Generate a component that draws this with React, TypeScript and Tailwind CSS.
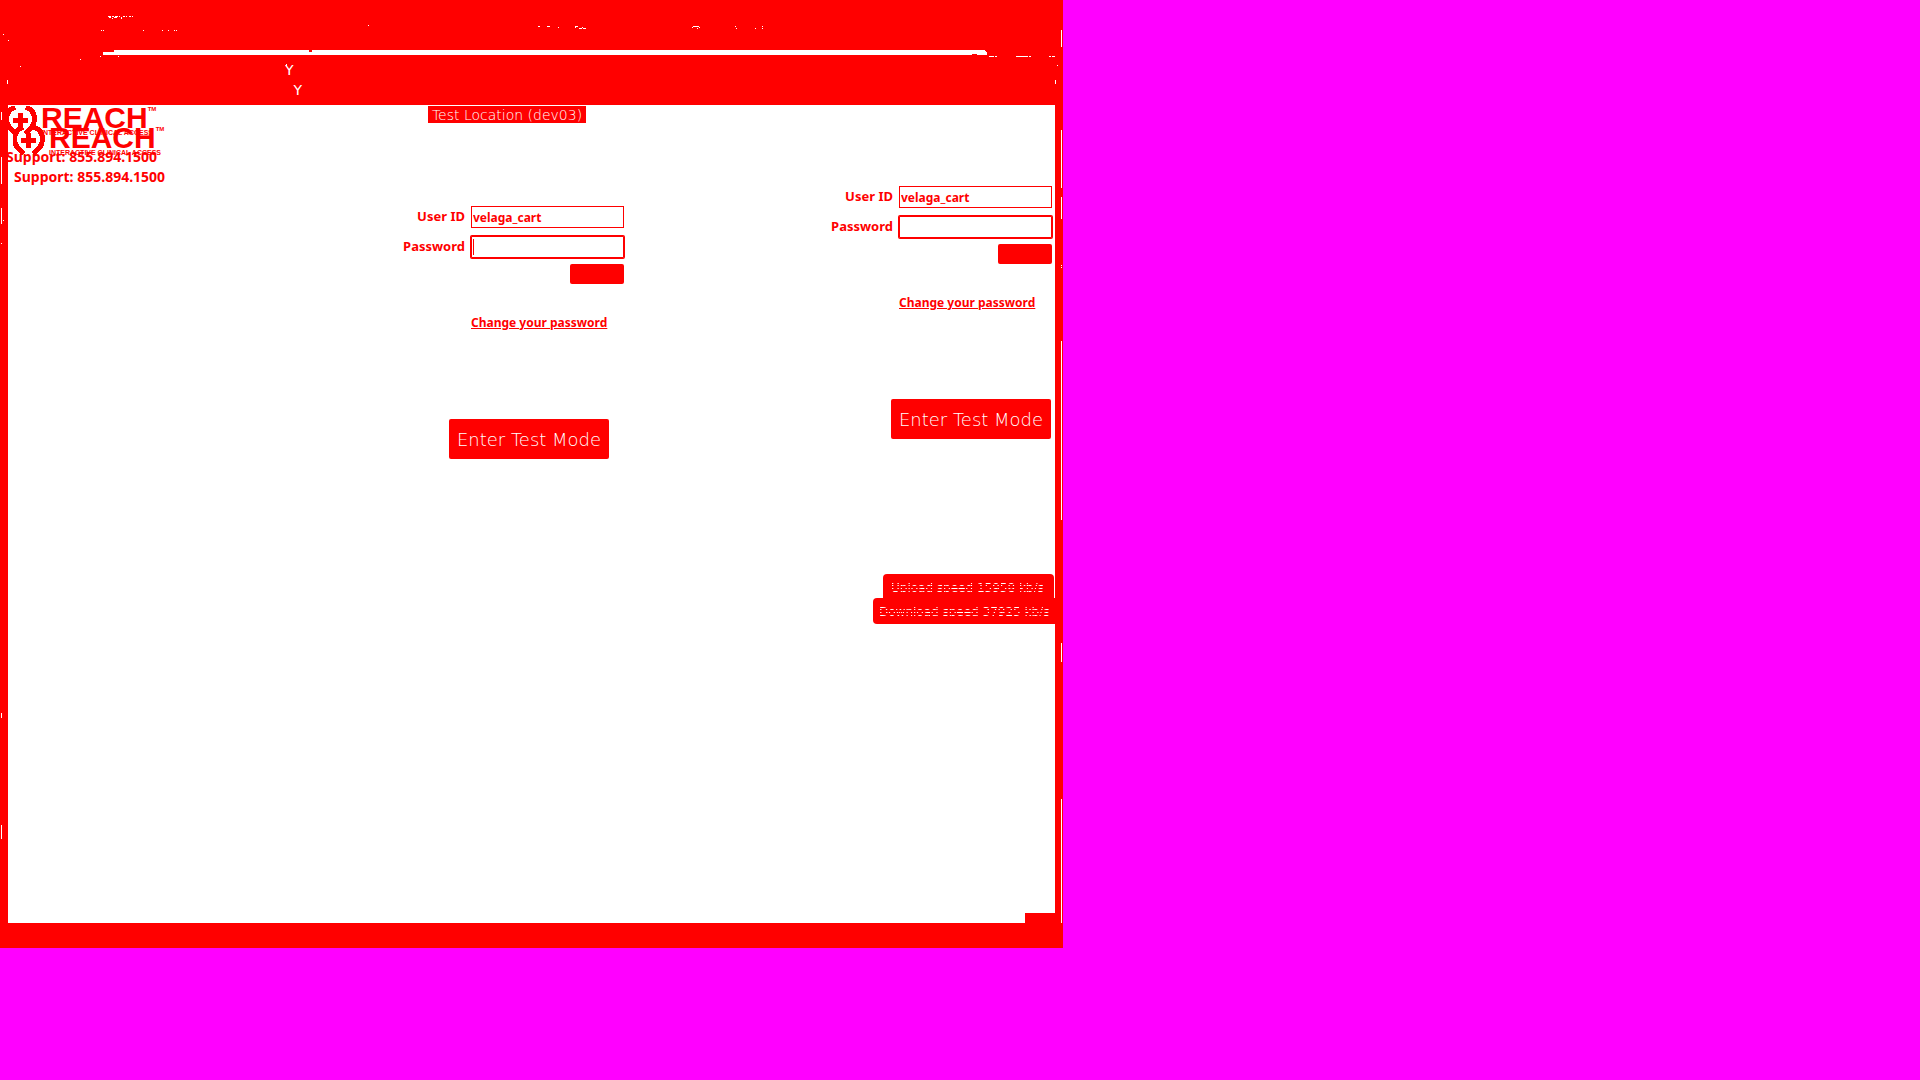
import React from "react";

const sans = "font-['DejaVu_Sans',sans-serif]";

function Emblem() {
  return (
    <svg width="32" height="30" viewBox="0 0 32 30" fill="none" stroke="#ff0000" aria-hidden="true" shapeRendering="crispEdges">
      <path d="M10 1 C0 5 0 15 4 21 L11 28" strokeWidth="5" />
      <path d="M21 1 C31 5 31 15 27 21 L20 28" strokeWidth="5" />
      <path d="M15.5 7v15M8 14.5h15" strokeWidth="5" />
    </svg>
  );
}

function Brand({ className = "" }: { className?: string }) {
  return (
    <div className={`flex h-[47px] w-[160px] flex-col ${className}`}>
      <div className="flex h-[30px] shrink-0">
        <Emblem />
        <div className="ml-1 font-['Liberation_Sans',sans-serif] font-bold">
          <div className="flex items-start">
            <span className="text-[30px] leading-[23px]">REACH</span>
            <span className="text-[6px] leading-[6px]">TM</span>
          </div>
          <div className="text-[7px] leading-[8px] whitespace-nowrap">INTERACTIVE CLINICAL ACCESS</div>
        </div>
      </div>
      <p className="mt-[13px] ml-px font-['Noto_Sans',sans-serif] text-[14px] leading-[16px] font-bold whitespace-nowrap">
        Support: 855.894.1500
      </p>
    </div>
  );
}

function LoginForm({ id, caret = false, modeClass }: { id: string; caret?: boolean; modeClass: string }) {
  return (
    <form className="flex w-[223px] flex-col font-['Noto_Sans',sans-serif] text-[13px] font-bold" onSubmit={(e) => e.preventDefault()}>
      <div className="flex h-[22px] items-center justify-end gap-1.5">
        <label htmlFor={`${id}-user`} className="whitespace-nowrap">User ID</label>
        <input
          id={`${id}-user`}
          defaultValue="velaga_cart"
          className="h-[22px] w-[153px] shrink-0 border border-[#ff0000] bg-white px-px text-[12px] font-bold outline-none"
        />
      </div>
      <div className="mt-2 flex h-[22px] items-center justify-end gap-1.5">
        <label htmlFor={`${id}-pass`} className="whitespace-nowrap">Password</label>
        <div className="relative h-[22px] w-[153px] shrink-0">
          <input
            id={`${id}-pass`}
            type="password"
            className="block h-[22px] w-full rounded-[1px] border border-[#ff0000] bg-white px-px ring-1 ring-[#ff0000] outline-none"
          />
          {caret && <span className="absolute top-[3px] left-0.5 h-4 w-px bg-[#ff0000]" />}
        </div>
      </div>
      <button type="submit" aria-label="Log in" className="mt-1.5 h-5 w-[54px] self-end rounded-[2px] bg-[#ff0000]" />
      <a href="#change" className="mt-[29px] ml-[70px] self-start text-[12px] leading-[20px] whitespace-nowrap underline">
        Change your password
      </a>
      <button
        type="button"
        className={`mt-[86px] h-10 w-40 rounded-[2px] bg-[#ff0000] font-['DejaVu_Sans',sans-serif] text-[18px] font-extralight whitespace-nowrap text-white ${modeClass}`}
      >
        Enter Test Mode
      </button>
    </form>
  );
}

function SpeedLine({ children }: { children: string }) {
  return (
    <span className="block [mask-image:linear-gradient(transparent_9px,#000_9px,#000_10px,transparent_10px,transparent_11px,#000_11px,#000_12px,transparent_12px,transparent_14px,#000_14px,#000_15px,transparent_15px,transparent_17px,#000_17px,#000_18px,transparent_18px)]">
      {children}
    </span>
  );
}

function HeaderSpecks() {
  return (
    <svg className="absolute inset-0" width="1063" height="105" fill="#fff" shapeRendering="crispEdges" aria-hidden="true">
      <path d="M108 16h3v1h-3zM109 17h2v1h-2zM112 16h2v1h-2zM112 18h1v1h-1zM114 17h3v1h-3zM115 16h3v1h-3zM119 16h1v1h-1zM121 17h1v2h-1zM123 16h2v1h-2zM126 16h1v1h-1zM129 16h2v1h-2zM132 16h1v1h-1z" />
      <path d="M101 30h1v1h-1zM103 30h1v1h-1zM143 30h1v1h-1zM162 30h1v1h-1zM168 30h1v1h-1zM174 30h1v1h-1zM176 30h1v1h-1zM3 34h1v1h-1zM8 40h1v1h-1zM368 25h1v1h-1z" />
      <path d="M538 26h2v1h-2zM547 26h3v1h-3zM558 27h1v1h-1zM575 26h3v1h-3zM575 27h1v1h-1zM579 28h3v1h-3zM582 27h1v1h-1zM583 28h3v1h-3z" />
      <path d="M693 26h6v1h-6zM692 27h1v1h-1zM699 27h1v1h-1zM697 28h1v1h-1zM735 26h1v1h-1zM736 28h1v1h-1zM755 28h1v1h-1zM762 26h1v1h-1zM762 28h1v1h-1z" />
      <path d="M100 56h1v1h-1zM118 56h1v1h-1zM80 59h1v1h-1zM20 66h1v1h-1zM7 80h1v4h-1zM286 64h1v2h-1z" />
      <path d="M989 56h5v1h-5zM995 56h2v1h-2zM1016 56h12v1h-12zM1029 56h2v1h-2zM1049 56h2v1h-2zM1052 56h3v1h-3zM1057 65h1v1h-1zM1055 80h1v4h-1zM1061 30h1v17h-1z" />
      <path fill="#ff0000" d="M103 50h11v2h-11zM309 50h3v2h-3zM972 54h5v1h-5zM985 50h2v1h-2zM986 51h1v1h-1z" />
    </svg>
  );
}

export default function App() {
  return (
    <div className={`min-h-screen bg-[#ff00ff] ${sans}`}>
      <div className="w-[55.365%] bg-[#ff0000] text-[#ff0000]">
        <header className="relative h-[105px] overflow-hidden pt-[50px]">
          <div className="mr-[76px] ml-[103px] h-[5px] bg-white" />
          <HeaderSpecks />
          <div className="ml-[285px] flex w-[17px] flex-col pt-[5px] text-[14px] leading-[20px] text-white">
            <span className="[clip-path:inset(5px_0_0_0)]">Y</span>
            <span className="self-end">Y</span>
          </div>
        </header>
        <div className="flex">
          <svg className="w-2 shrink-0" width="8" height="818" fill="#fff" shapeRendering="crispEdges" aria-hidden="true">
            <path d="M1 7h1v8h-1zM1 52h1v27h-1zM3 115h1v1h-1zM1 103h1v16h-1zM1 138h1v1h-1zM1 608h1v5h-1zM1 720h1v14h-1z" />
          </svg>
          <main className="flex min-h-[818px] flex-1 flex-col overflow-hidden bg-white">
            <div className="flex items-start pt-px">
              <div className="h-[80px] w-[393px] shrink-0">
                <Brand className="-ml-[3px]" />
                <Brand className="-mt-[27px] ml-[5px]" />
              </div>
              <div className="flex shrink-0 flex-col">
                <div className="ml-[27px] h-[17px] w-[158px] bg-[#ff0000] text-center text-[14px] leading-[19px] font-extralight whitespace-nowrap text-white">
                  Test Location (dev03)
                </div>
                <div className="mt-[83px]">
                  <LoginForm id="first" caret modeClass="ml-[48px]" />
                </div>
              </div>
              <div className="flex flex-1 flex-col items-end pt-20">
                <div className="mr-[3px]">
                  <LoginForm id="second" modeClass="ml-[62px]" />
                </div>
                <div className="mt-[135px] mr-px h-6 w-[171px] rounded-t-[4px] bg-[#ff0000] pl-2 text-[12px] leading-[28px] whitespace-nowrap text-white">
                  <SpeedLine>Upload speed 15958 kb/s</SpeedLine>
                </div>
                <div className="h-[26px] w-[182px] rounded-l-[4px] bg-[#ff0000] pl-1.5 text-[12px] leading-[28px] whitespace-nowrap text-white">
                  <SpeedLine>Download speed 37925 kb/s</SpeedLine>
                </div>
              </div>
            </div>
            <div className="mt-auto h-2.5 w-[30px] self-end bg-[#ff0000]" />
          </main>
          <svg className="w-2 shrink-0" width="8" height="818" fill="#fff" shapeRendering="crispEdges" aria-hidden="true">
            <path d="M6 25h1v58h-1zM6 92h1v22h-1zM6 160h1v1h-1zM6 162h1v1h-1zM6 236h1v179h-1zM6 538h1v19h-1zM6 694h1v124h-1z" />
          </svg>
        </div>
        <footer className="h-[25px]" />
      </div>
    </div>
  );
}
